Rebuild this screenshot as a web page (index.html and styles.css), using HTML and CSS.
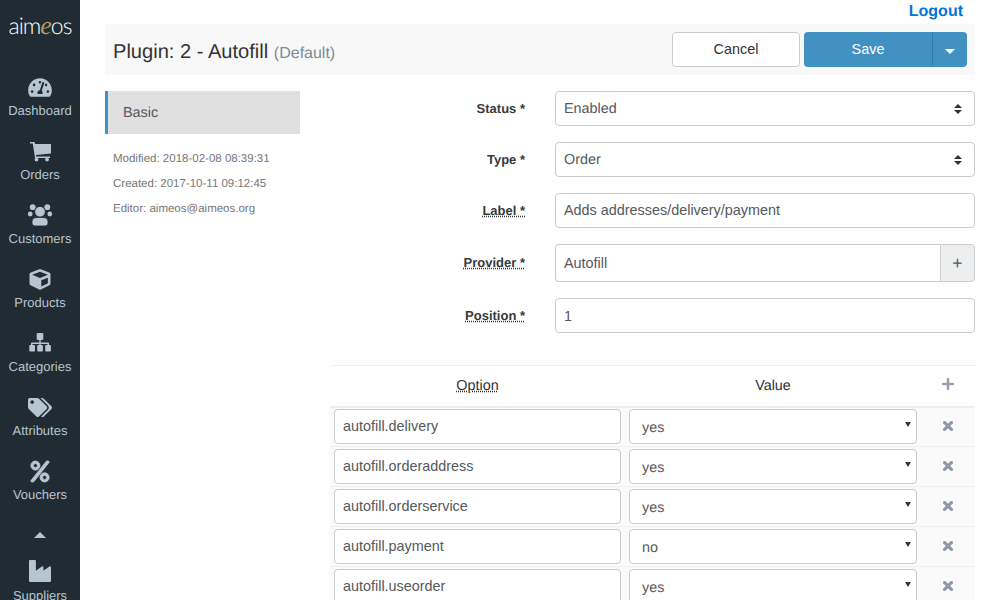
FILE: index.html
```html
<!DOCTYPE html>
<html lang="en">
<head>
    <meta charset="UTF-8">
    <meta name="viewport" content="width=device-width, initial-scale=1.0">
    <title>Plugin: 2 - Autofill</title>
    <link rel="stylesheet" href="styles.css">
</head>
<body>
    <div class="app">
        <nav class="sidebar">
            <div class="logo">aim<em>e</em>os</div>
            <a class="nav-item">
                <svg class="nav-icon" viewBox="0 0 576 512"><path d="M288 32C128.94 32 0 160.94 0 320c0 52.8 14.25 102.26 39.06 144.8 5.61 9.62 16.3 15.2 27.44 15.2h443c11.14 0 21.83-5.58 27.44-15.2C561.75 422.26 576 372.8 576 320c0-159.06-128.94-288-288-288zm0 64c14.71 0 26.58 10.13 30.32 23.65-1.11 2.26-2.64 4.23-3.45 6.67l-9.22 27.67c-5.13 3.49-10.97 6.01-17.64 6.01-17.67 0-32-14.33-32-32S270.33 96 288 96zM96 384c-17.67 0-32-14.33-32-32s14.33-32 32-32 32 14.33 32 32-14.33 32-32 32zm48-160c-17.67 0-32-14.33-32-32s14.33-32 32-32 32 14.33 32 32-14.33 32-32 32zm246.77-72.41l-61.33 184C343.13 347.33 352 364.54 352 384c0 11.72-3.38 22.55-8.88 32H232.88c-5.5-9.45-8.88-20.28-8.88-32 0-33.94 26.5-61.43 59.9-63.59l61.34-184.01c4.17-12.56 17.73-19.45 30.36-15.17 12.57 4.19 19.35 17.79 15.17 30.36zm14.66 57.2l15.52-46.55c3.47-1.29 7.13-2.23 11.05-2.23 17.67 0 32 14.33 32 32s-14.33 32-32 32c-11.38-.01-20.89-6.28-26.57-15.22zM480 384c-17.67 0-32-14.33-32-32s14.33-32 32-32 32 14.33 32 32-14.33 32-32 32z"/></svg>
                <span>Dashboard</span>
            </a>
            <a class="nav-item">
                <svg class="nav-icon" viewBox="0 0 24 21"><path d="M2 1h4.5l.7 2H23v9.500l-15 1.500.3 1.500H22v1.500H7L4.800 2.500H2z"/><circle cx="8.500" cy="18.600" r="1.900"/><circle cx="19" cy="18.600" r="1.900"/></svg>
                <span>Orders</span>
            </a>
            <a class="nav-item">
                <svg class="nav-icon nav-icon-users" viewBox="0 0 24 21"><circle cx="4.700" cy="2.200" r="2.900"/><circle cx="19.300" cy="2.200" r="2.900"/><circle cx="2.200" cy="9" r="2.400"/><circle cx="21.800" cy="9" r="2.400"/><path d="M5 7h14v13H5z" class="gap"/><circle cx="12" cy="6.700" r="5.300"/><path d="M8 12.500h8a4 4 0 0 1 4 4V18a3 3 0 0 1-3 3H7a3 3 0 0 1-3-3v-1.500a4 4 0 0 1 4-4z"/></svg>
                <span>Customers</span>
            </a>
            <a class="nav-item">
                <svg class="nav-icon" viewBox="0 0 512 512"><path d="M239.1 6.3l-208 78c-18.7 7-31.1 25-31.1 45v225.1c0 18.2 10.3 34.8 26.5 42.9l208 104c13.5 6.8 29.4 6.8 42.9 0l208-104c16.3-8.1 26.5-24.8 26.5-42.9V129.3c0-20-12.4-37.9-31.1-44.9l-208-78C262 2.2 250 2.2 239.1 6.3zM256 68.4l192 72v1.1l-192 78-192-78v-1.1l192-72zm32 356V275.5l160-65v133.9l-160 80z"/></svg>
                <span>Products</span>
            </a>
            <a class="nav-item">
                <svg class="nav-icon" viewBox="0 0 24 21"><path d="M9.700 0h4.600a1 1 0 0 1 1 1v5a1 1 0 0 1-1 1h-1.600v2.500H20a1 1 0 0 1 1 1V12h-1.500v-1H12.700v1h-1.400v-1H4.500v1H3v-1.500a1 1 0 0 1 1-1h7.300V7H9.700a1 1 0 0 1-1-1V1a1 1 0 0 1 1-1z"/><rect x="1.300" y="12" width="5.700" height="6.500" rx="1"/><rect x="9.200" y="12" width="5.700" height="6.500" rx="1"/><rect x="17.200" y="12" width="5.700" height="6.500" rx="1"/></svg>
                <span>Categories</span>
            </a>
            <a class="nav-item">
                <svg class="nav-icon" viewBox="0 0 640 512"><path d="M497.941 225.941L286.059 14.059A48 48 0 0 0 252.118 0H48C21.49 0 0 21.49 0 48v204.118a48 48 0 0 0 14.059 33.941l211.882 211.882c18.744 18.745 49.136 18.746 67.882 0l204.118-204.118c18.745-18.745 18.745-49.137 0-67.882zM112 160c-26.51 0-48-21.49-48-48s21.49-48 48-48 48 21.49 48 48-21.49 48-48 48zm513.941 133.823L421.823 497.941c-18.745 18.745-49.137 18.745-67.882 0l-.36-.36L527.64 323.522c16.999-16.999 26.36-39.6 26.36-63.64s-9.362-46.641-26.36-63.64L331.397 0h48.721a48 48 0 0 1 33.941 14.059l211.882 211.882c18.745 18.745 18.745 49.137 0 67.882z"/></svg>
                <span>Attributes</span>
            </a>
            <a class="nav-item">
                <svg class="nav-icon nav-icon-bold" viewBox="0 0 448 512"><path d="M112 224c61.9 0 112-50.1 112-112S173.9 0 112 0 0 50.1 0 112s50.1 112 112 112zm0-160c26.5 0 48 21.5 48 48s-21.5 48-48 48-48-21.5-48-48 21.5-48 48-48zm224 224c-61.9 0-112 50.1-112 112s50.1 112 112 112 112-50.1 112-112-50.1-112-112-112zm0 160c-26.5 0-48-21.5-48-48s21.5-48 48-48 48 21.5 48 48-21.5 48-48 48zM392.3.2l31.6-.1c19.4-.1 30.9 21.8 19.7 37.8L77.4 501.6a23.95 23.95 0 0 1-19.6 10.2l-33.4.1c-19.5 0-30.9-21.9-19.7-37.8l368-463.7C377.2 4 384.5.2 392.3.2z"/></svg>
                <span>Vouchers</span>
            </a>
            <div class="nav-more"></div>
            <a class="nav-item nav-item-last">
                <svg class="nav-icon nav-icon-tall" viewBox="0 32 512 448" preserveAspectRatio="none"><path d="M475.115 163.781L336 252.309v-68.28c0-18.916-20.931-30.399-36.885-20.248L160 252.309V56c0-13.255-10.745-24-24-24H24C10.745 32 0 42.745 0 56v400c0 13.255 10.745 24 24 24h464c13.255 0 24-10.745 24-24V184.029c0-18.917-20.931-30.399-36.885-20.248z"/></svg>
                <span>Suppliers</span>
            </a>
        </nav>

        <main class="main">
            <div class="topbar"><a class="logout">Logout</a></div>
            <div class="page-header">
                <h1>Plugin: 2 - Autofill <small>(Default)</small></h1>
                <div class="actions">
                    <button class="btn btn-cancel">Cancel</button>
                    <div class="btn-group">
                        <button class="btn btn-save">Save</button>
                        <button class="btn btn-caret"><span class="caret"></span></button>
                    </div>
                </div>
            </div>

            <div class="content">
                <aside class="side">
                    <div class="tab">Basic</div>
                    <div class="meta">
                        <p>Modified: 2018-02-08 08:39:31</p>
                        <p>Created: 2017-10-11 09:12:45</p>
                        <p>Editor: aimeos@aimeos.org</p>
                    </div>
                </aside>

                <div class="form">
                    <div class="form-row">
                        <label>Status *</label>
                        <div class="control select-box">Enabled</div>
                    </div>
                    <div class="form-row">
                        <label>Type *</label>
                        <div class="control select-box">Order</div>
                    </div>
                    <div class="form-row">
                        <label><span class="help">Label *</span></label>
                        <input class="control control-up" type="text" value="Adds addresses/delivery/payment">
                    </div>
                    <div class="form-row form-row-tall">
                        <label><span class="help">Provider *</span></label>
                        <div class="input-group">
                            <input class="control" type="text" value="Autofill">
                            <span class="addon">+</span>
                        </div>
                    </div>
                    <div class="form-row">
                        <label><span class="help">Position *</span></label>
                        <input class="control" type="text" value="1">
                    </div>

                    <table class="options">
                        <thead>
                            <tr>
                                <th><span class="help">Option</span></th>
                                <th>Value</th>
                                <th class="col-act">
                                    <svg class="icon-plus" viewBox="0 32 448 448"><path d="M416 208H272V64c0-17.670-14.330-32-32-32h-32c-17.670 0-32 14.330-32 32v144H32c-17.670 0-32 14.330-32 32v32c0 17.670 14.330 32 32 32h144v144c0 17.670 14.330 32 32 32h32c17.670 0 32-14.330 32-32V304h144c17.670 0 32-14.330 32-32v-32c0-17.670-14.330-32-32-32z"/></svg>
                                </th>
                            </tr>
                        </thead>
                        <tbody>
                            <tr>
                                <td><input class="control control-up" type="text" value="autofill.delivery"></td>
                                <td><div class="control combo">yes</div></td>
                                <td class="col-act"><svg class="icon-del" viewBox="0 80 352 352"><path d="M242.72 256l100.07-100.07c12.28-12.28 12.28-32.19 0-44.48l-22.24-22.24c-12.28-12.28-32.19-12.28-44.48 0L176 189.28 75.93 89.21c-12.28-12.28-32.19-12.28-44.48 0L9.21 111.45c-12.28 12.28-12.28 32.19 0 44.48L109.28 256 9.21 356.07c-12.28 12.28-12.28 32.19 0 44.48l22.24 22.24c12.28 12.28 32.2 12.28 44.48 0L176 322.72l100.07 100.07c12.28 12.28 32.2 12.28 44.48 0l22.24-22.24c12.28-12.28 12.28-32.19 0-44.48L242.72 256z"/></svg></td>
                            </tr>
                            <tr>
                                <td><input class="control control-up" type="text" value="autofill.orderaddress"></td>
                                <td><div class="control combo">yes</div></td>
                                <td class="col-act"><svg class="icon-del" viewBox="0 80 352 352"><path d="M242.72 256l100.07-100.07c12.28-12.28 12.28-32.19 0-44.48l-22.24-22.24c-12.28-12.28-32.19-12.28-44.48 0L176 189.28 75.93 89.21c-12.28-12.28-32.19-12.28-44.48 0L9.21 111.45c-12.28 12.28-12.28 32.19 0 44.48L109.28 256 9.21 356.07c-12.28 12.28-12.28 32.19 0 44.48l22.24 22.24c12.28 12.28 32.2 12.28 44.48 0L176 322.72l100.07 100.07c12.28 12.28 32.2 12.28 44.48 0l22.24-22.24c12.28-12.28 12.28-32.19 0-44.48L242.72 256z"/></svg></td>
                            </tr>
                            <tr>
                                <td><input class="control control-up" type="text" value="autofill.orderservice"></td>
                                <td><div class="control combo">yes</div></td>
                                <td class="col-act"><svg class="icon-del" viewBox="0 80 352 352"><path d="M242.72 256l100.07-100.07c12.28-12.28 12.28-32.19 0-44.48l-22.24-22.24c-12.28-12.28-32.19-12.28-44.48 0L176 189.28 75.93 89.21c-12.28-12.28-32.19-12.28-44.48 0L9.21 111.45c-12.28 12.28-12.28 32.19 0 44.48L109.28 256 9.21 356.07c-12.28 12.28-12.28 32.19 0 44.48l22.24 22.24c12.28 12.28 32.2 12.28 44.48 0L176 322.72l100.07 100.07c12.28 12.28 32.2 12.28 44.48 0l22.24-22.24c12.28-12.28 12.28-32.19 0-44.48L242.72 256z"/></svg></td>
                            </tr>
                            <tr>
                                <td><input class="control control-up" type="text" value="autofill.payment"></td>
                                <td><div class="control combo">no</div></td>
                                <td class="col-act"><svg class="icon-del" viewBox="0 80 352 352"><path d="M242.72 256l100.07-100.07c12.28-12.28 12.28-32.19 0-44.48l-22.24-22.24c-12.28-12.28-32.19-12.28-44.48 0L176 189.28 75.93 89.21c-12.28-12.28-32.19-12.28-44.48 0L9.21 111.45c-12.28 12.28-12.28 32.19 0 44.48L109.28 256 9.21 356.07c-12.28 12.28-12.28 32.19 0 44.48l22.24 22.24c12.28 12.28 32.2 12.28 44.48 0L176 322.72l100.07 100.07c12.28 12.28 32.2 12.28 44.48 0l22.24-22.24c12.28-12.28 12.28-32.19 0-44.48L242.72 256z"/></svg></td>
                            </tr>
                            <tr>
                                <td><input class="control control-up" type="text" value="autofill.useorder"></td>
                                <td><div class="control combo">yes</div></td>
                                <td class="col-act"><svg class="icon-del" viewBox="0 80 352 352"><path d="M242.72 256l100.07-100.07c12.28-12.28 12.28-32.19 0-44.48l-22.24-22.24c-12.28-12.28-32.19-12.28-44.48 0L176 189.28 75.93 89.21c-12.28-12.28-32.19-12.28-44.48 0L9.21 111.45c-12.28 12.28-12.28 32.19 0 44.48L109.28 256 9.21 356.07c-12.28 12.28-12.28 32.19 0 44.48l22.24 22.24c12.28 12.28 32.2 12.28 44.48 0L176 322.72l100.07 100.07c12.28 12.28 32.2 12.28 44.48 0l22.24-22.24c12.28-12.28 12.28-32.19 0-44.48L242.72 256z"/></svg></td>
                            </tr>
                        </tbody>
                    </table>
                </div>
            </div>
        </main>
    </div>
</body>
</html>
```

FILE: styles.css
```css
html, body {
    height: 100%;
    overflow: hidden;
}
body {
    margin: 0;
    font-family: "Liberation Sans", Arial, sans-serif;
    font-size: 14.4px;
    line-height: 1.5;
    color: #333;
    background-color: #fff;
    text-rendering: geometricPrecision;
}
* {
    box-sizing: border-box;
}
.app {
    display: flex;
    height: 600px;
    overflow: hidden;
}

/* sidebar */
.sidebar {
    flex: 0 0 80px;
    background-color: #212b33;
    color: #b6c6d0;
    text-align: center;
    overflow: hidden;
}
.logo {
    height: 64px;
    padding-top: 9px;
    font-family: Lato, sans-serif;
    font-size: 23px;
    font-weight: 300;
    line-height: 32px;
    letter-spacing: -1px;
    color: #fff;
}
.logo em {
    font-family: "Liberation Serif", serif;
    font-size: 26px;
    line-height: 20px;
    color: #b89a5a;
}
.nav-item {
    display: block;
    height: 64px;
    padding-top: 13px;
    font-size: 13px;
    line-height: 18px;
}
.nav-icon {
    display: block;
    width: 24px;
    height: 21px;
    margin: 0 auto 4px;
    fill: #b6c6d0;
    overflow: visible;
}
.nav-icon-bold {
    stroke: #b6c6d0;
    stroke-width: 18;
}
.nav-icon-users circle:nth-of-type(5),
.nav-icon-users path:last-child {
    stroke: #212b33;
    stroke-width: .8;
}
.nav-icon-users .gap {
    fill: none;
}
.nav-icon-tall {
    width: 22px;
    height: 22px;
    margin-bottom: 5px;
}
.nav-item span {
    display: block;
}
.nav-more {
    width: 0;
    height: 0;
    margin: 20px auto 0;
    border-left: 6px solid transparent;
    border-right: 6px solid transparent;
    border-bottom: 6px solid #b6c6d0;
}
.nav-item-last {
    padding-top: 22px;
}

/* main area */
.main {
    flex: 1;
    padding: 0 25px;
    min-width: 0;
}
.topbar {
    height: 24px;
    padding-right: 12px;
    text-align: right;
}
.logout {
    font-size: 16px;
    font-weight: bold;
    line-height: 24px;
    color: #0275d8;
}
.page-header {
    display: flex;
    justify-content: space-between;
    align-items: center;
    height: 51px;
    padding: 0 8px;
    margin-bottom: 16px;
    background-color: #f8f8f8;
}
h1 {
    margin: 6px 0 0;
    font-size: 20.1px;
    font-weight: 400;
    line-height: 30px;
}
h1 small {
    font-size: 16px;
    color: #818a91;
}
.actions {
    display: flex;
    gap: 4px;
}
.btn {
    height: 35px;
    padding-bottom: 2px;
    font-family: inherit;
    font-size: 14.4px;
    border: 1px solid transparent;
    border-radius: 4px;
}
.btn-cancel {
    width: 128px;
    background-color: #fff;
    border-color: #ccc;
    color: #333;
}
.btn-group {
    display: flex;
}
.btn-save {
    width: 128px;
    background-color: #4191c2;
    color: #fff;
    border-radius: 4px 0 0 4px;
}
.btn-caret {
    width: 35px;
    padding-bottom: 0;
    background-color: #4191c2;
    border-left-color: #2f7aa8;
    border-radius: 0 4px 4px 0;
}
.caret {
    display: inline-block;
    width: 0;
    height: 0;
    margin-top: 1px;
    vertical-align: middle;
    border-left: 5px solid transparent;
    border-right: 5px solid transparent;
    border-top: 5px solid #fff;
}

/* content */
.content {
    display: flex;
}
.side {
    flex: 0 0 195px;
    margin-right: 30px;
}
.tab {
    height: 43px;
    padding-left: 15px;
    line-height: 44px;
    color: #55595c;
    background-color: #e0e0e0;
    border-left: 3px solid #4191c2;
}
.meta {
    padding: 13px 8px 0;
    font-size: 11.5px;
    color: #777;
}
.meta p {
    margin: 0;
    height: 25px;
    line-height: 25px;
}
.form {
    flex: 1;
    min-width: 0;
}
.form-row {
    display: flex;
    align-items: center;
    margin-bottom: 16px;
}
.form-row label {
    flex: 0 0 195px;
    font-size: 13px;
    font-weight: bold;
    text-align: right;
    margin-right: 30px;
    color: #373a3c;
}
.help {
    text-decoration: underline dotted;
}
.control {
    display: block;
    width: 100%;
    height: 35px;
    padding: 0 8px;
    font-family: inherit;
    font-size: 14.4px;
    line-height: 33px;
    color: #55595c;
    background-color: #fff;
    border: 1px solid #ccc;
    border-radius: 4px;
}
.control-up {
    padding-bottom: 2px;
}
.select-box {
    position: relative;
    line-height: 35px;
}
.select-box::before,
.select-box::after {
    content: "";
    position: absolute;
    right: 12px;
    width: 0;
    height: 0;
    border-left: 4px solid transparent;
    border-right: 4px solid transparent;
}
.select-box::before {
    top: 12px;
    border-bottom: 4px solid #333;
}
.select-box::after {
    top: 18px;
    border-top: 4px solid #333;
}
.input-group {
    display: flex;
    flex: 1;
    height: 38px;
}
.input-group .control {
    flex: 1;
    height: 38px;
    border-right: 0;
    border-radius: 4px 0 0 4px;
}
.addon {
    flex: 0 0 35px;
    line-height: 36px;
    text-align: center;
    font-size: 17.6px;
    color: #55595c;
    background-color: #eceeef;
    border: 1px solid #ccc;
    border-radius: 0 4px 4px 0;
}

/* option table */
.options {
    width: 100%;
    margin-top: 32px;
    border-collapse: collapse;
    table-layout: fixed;
}
.options th {
    height: 41px;
    padding: 2px 0 0;
    font-weight: 400;
    text-align: center;
    border-top: 1px solid #eceeef;
    border-bottom: 2px solid #eceeef;
}
.options td {
    height: 40px;
    padding: 0 4px;
    background-color: #fafafa;
    border-bottom: 1px solid #eceeef;
}
.options .col-act {
    width: 54px;
    text-align: center;
}
.options th:first-child {
    width: 295px;
}
.options th:nth-child(2) {
    width: 296px;
}
.icon-plus {
    display: inline-block;
    width: 12px;
    height: 12px;
    margin-bottom: 4px;
    vertical-align: middle;
    fill: #9a9fb0;
}
.icon-del {
    display: inline-block;
    width: 10px;
    height: 10px;
    vertical-align: middle;
    fill: #9097a8;
    stroke: #9097a8;
    stroke-width: 20;
}
.combo {
    position: relative;
    padding-left: 12px;
    line-height: 37px;
}
.combo::after {
    content: "";
    position: absolute;
    top: 12px;
    right: 5px;
    width: 0;
    height: 0;
    border-left: 3px solid transparent;
    border-right: 3px solid transparent;
    border-top: 5px solid #333;
}
```
